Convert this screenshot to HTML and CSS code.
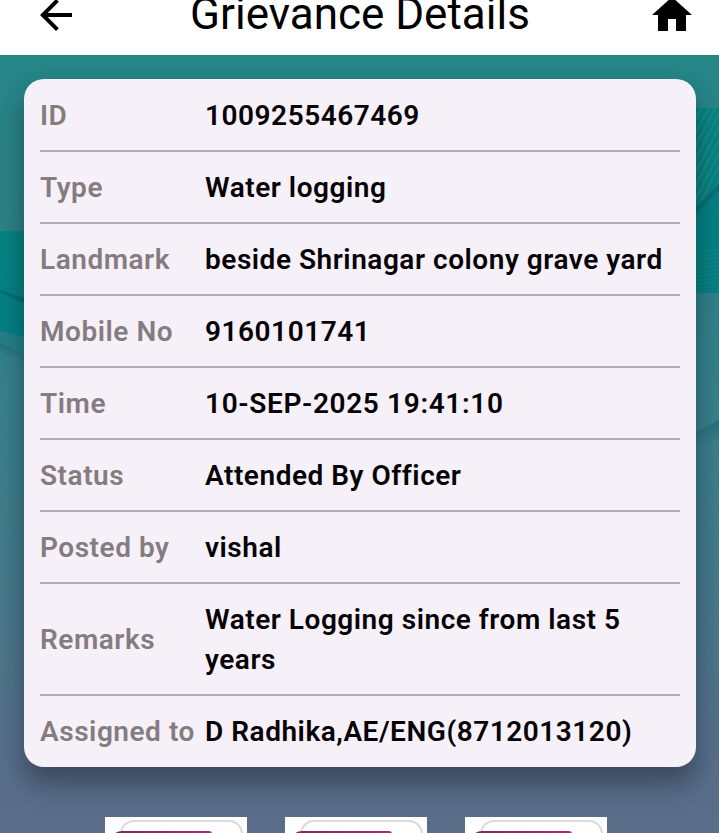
FILE: index.html
```html
<!DOCTYPE html>
<html lang="en">
<head>
<meta charset="utf-8">
<title>Grievance Details</title>
<link rel="stylesheet" href="styles.css">
</head>
<body>
<header class="bar">
  <svg class="icon" viewBox="0 0 24 24"><path d="M20 11H7.83l5.59-5.59L12 4l-8 8 8 8 1.41-1.41L7.83 13H20v-2z"/></svg>
  <h1 class="title">Grievance Details</h1>
  <svg class="icon" viewBox="0 0 24 24"><path d="M10 20v-6h4v6h5v-8h3L12 3 2 12h3v8z"/></svg>
</header>
<main class="page">
  <svg class="backdrop" viewBox="0 0 719 778" preserveAspectRatio="none">
    <defs>
      <linearGradient id="sky" x1="0" y1="0" x2="0" y2="1">
        <stop offset="0" stop-color="#268587"/><stop offset=".18" stop-color="#2c8388"/>
        <stop offset=".42" stop-color="#36818c"/><stop offset=".68" stop-color="#457a8a"/>
        <stop offset=".92" stop-color="#596e8b"/><stop offset="1" stop-color="#5a6d89"/>
      </linearGradient>
      <linearGradient id="wave" x1="0" y1="0" x2="0" y2="1">
        <stop offset="0" stop-color="#088384"/><stop offset="1" stop-color="#047f83"/>
      </linearGradient>
      <pattern id="rays" width="6" height="6" patternUnits="userSpaceOnUse" patternTransform="rotate(27)">
        <rect width="2.5" height="6" fill="#249188" opacity=".5"/>
      </pattern>
      <pattern id="ripples" width="8" height="4" patternUnits="userSpaceOnUse" patternTransform="rotate(-4)">
        <rect width="8" height="1.5" fill="#259088" opacity=".3"/>
      </pattern>
      <linearGradient id="fold" x1="0" y1="0" x2="0" y2="1">
        <stop offset="0" stop-color="#206f7b"/><stop offset="1" stop-color="#3c7b88" stop-opacity="0"/>
      </linearGradient>
    </defs>
    <rect width="719" height="778" fill="url(#sky)"/>
    <path d="M0 176L60 175V294L24 282 0 276z" fill="url(#wave)"/>
    <path d="M0 235L24 243V248L0 237z" fill="#056a72" opacity=".8"/>
    <path d="M0 276L24 282V305L0 291z" fill="#248187"/>
    <path d="M0 288L24 299V312L0 296z" fill="url(#fold)"/>
    <path d="M680 53H719V238H680z" fill="url(#wave)"/>
    <path d="M680 53H719V130L680 170z" fill="url(#rays)"/>
    <path d="M719 128L680 168V175L719 135z" fill="#08686e" opacity=".6"/>
    <path d="M680 193H719V238H680z" fill="url(#ripples)"/>
    <path d="M719 365L680 386V402L719 383z" fill="url(#fold)"/>
  </svg>
  <section class="card">
    <dl class="row"><dt>ID</dt><dd>1009255467469</dd></dl>
    <dl class="row"><dt>Type</dt><dd>Water logging</dd></dl>
    <dl class="row"><dt>Landmark</dt><dd>beside Shrinagar colony grave yard</dd></dl>
    <dl class="row"><dt>Mobile No</dt><dd>9160101741</dd></dl>
    <dl class="row"><dt>Time</dt><dd class="stamp">10-SEP-2025 19:41:10</dd></dl>
    <dl class="row"><dt>Status</dt><dd>Attended By Officer</dd></dl>
    <dl class="row"><dt>Posted by</dt><dd>vishal</dd></dl>
    <dl class="row"><dt>Remarks</dt><dd>Water Logging since from last 5 years</dd></dl>
    <dl class="row"><dt>Assigned to</dt><dd>D Radhika,AE/ENG(8712013120)</dd></dl>
  </section>
  <div class="thumbs">
    <div class="thumb"><div class="frame"></div><div class="banner"></div></div>
    <div class="thumb"><div class="frame"></div><div class="banner"></div></div>
    <div class="thumb"><div class="frame"></div><div class="banner"></div></div>
  </div>
</main>
</body>
</html>
```
FILE: styles.css
```css
* { box-sizing: border-box; margin: 0; }
html, body { height: 833px; overflow: hidden; }
body { display: flex; flex-direction: column; font-family: Roboto, sans-serif; background: #fff; }
.bar {
  flex: none; display: flex; align-items: flex-start; justify-content: space-between;
  width: 719px; height: 55px; padding: 0 23px 0 32px;
}
.icon { flex: none; width: 48px; height: 48px; margin-top: -9px; fill: #000; }
.title { margin-top: -12px; padding-right: 8px; font-size: 44px; line-height: 52px; font-weight: 400; white-space: nowrap; color: #000; }
.page { position: relative; flex: 1; padding: 24px 23px 0 24px; overflow: hidden; }
.backdrop { position: absolute; left: 0; top: 0; width: 719px; height: 778px; }
.card {
  position: relative; width: 672px; height: 688px; padding: 0 16px;
  background: #f6f1f9; border-radius: 20px;
  box-shadow: 0 16px 24px rgba(0,0,0,.25), 0 16px 32px rgba(0,0,0,.12);
}
.row {
  display: flex; align-items: center; padding: 16px 0 14px; min-height: 72px;
  border-bottom: 2px solid #b3adb5;
  font-size: 28px; line-height: 40px; font-weight: 600; letter-spacing: .53px;
}
.row:first-child { padding: 17px 0 14px; height: 73px; }
.row:last-child { border-bottom: 0; padding: 15px 0; }
.row dt { flex: none; width: 165px; color: #857c80; white-space: nowrap; }
.row dd { flex: 1; color: #050306; }
.row .stamp { letter-spacing: .65px; }
.thumbs { position: relative; display: flex; justify-content: center; gap: 38px; margin-top: 49.5px; padding-right: 8px; }
.thumb { position: relative; width: 142px; height: 142px; background: #fff; overflow: hidden; }
.frame { width: 123px; height: 130px; margin: 3px 0 0 15px; border: 2px solid #dddada; border-radius: 14px; }
.banner {
  position: absolute; left: 5px; top: 14px; width: 102px; height: 40px;
  border-radius: 12px 3px 0 0; background: linear-gradient(90deg, #842653, #a92a7b);
}
```
